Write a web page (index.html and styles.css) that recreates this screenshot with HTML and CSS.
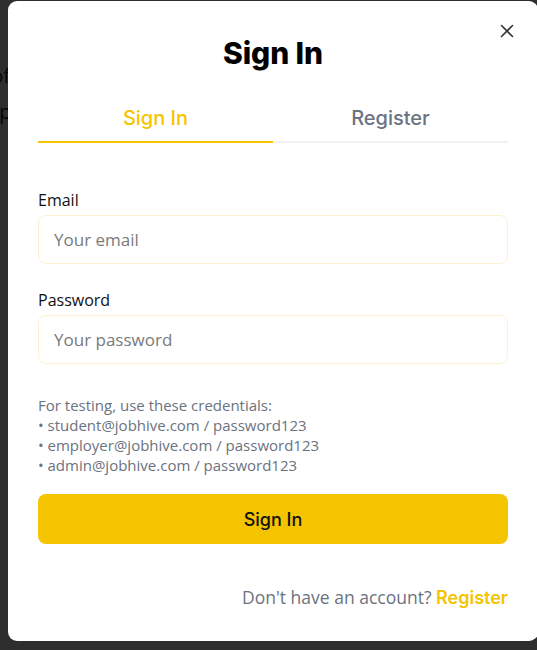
FILE: index.html
```html
<!DOCTYPE html>
<html>
<head>
<meta charset="utf-8">
<link rel="stylesheet" href="styles.css">
</head>
<body>
<div class="page">
  <p class="bg-line">Edit profile</p>
  <p class="bg-line">Quick apply</p>
</div>
<div class="backdrop"></div>
<div class="modal">
  <button class="close" aria-label="Close">
    <svg width="14" height="14" viewBox="0 0 14 14"><path d="M1.5 1.5 L12.5 12.5 M12.5 1.5 L1.5 12.5" stroke="#333" stroke-width="1.6" stroke-linecap="round" fill="none"/></svg>
  </button>
  <h1 class="title">Sign In</h1>
  <div class="tabs">
    <div class="tab active">Sign In</div>
    <div class="tab">Register</div>
  </div>
  <form class="form">
    <label class="field">
      <span class="label">Email</span>
      <input class="input" type="email" placeholder="Your email">
    </label>
    <label class="field">
      <span class="label">Password</span>
      <input class="input" type="password" placeholder="Your password">
    </label>
    <div class="hint">
      <div>For testing, use these credentials:</div>
      <div>• student@jobhive.com / password123</div>
      <div>• employer@jobhive.com / password123</div>
      <div>• admin@jobhive.com / password123</div>
    </div>
    <button type="button" class="submit">Sign In</button>
  </form>
  <div class="footer">Don't have an account? <a class="link">Register</a></div>
</div>
</body>
</html>
```
FILE: styles.css
```css
* { box-sizing: border-box; }
html, body { margin: 0; padding: 0; }
body {
  width: 537px;
  height: 650px;
  overflow: hidden;
  background: #ffffff;
  font-family: "Open Sans", "Noto Sans", sans-serif;
  position: relative;
}
.page {
  padding-top: 64px;
  margin-left: -70px;
}
.bg-line {
  margin: 0 0 12px;
  font-size: 20px;
  color: #222;
  line-height: 24px;
}
.backdrop {
  position: absolute;
  inset: 0;
  background: rgba(0, 0, 0, 0.82);
}
.modal {
  position: absolute;
  left: 8px;
  top: 1px;
  width: 530px;
  height: 640px;
  background: #fff;
  border-radius: 9px;
  padding: 34px 30px 0;
  display: flex;
  flex-direction: column;
}
.close {
  position: absolute;
  top: 23px;
  right: 24px;
  width: 14px;
  height: 14px;
  padding: 0;
  border: 0;
  background: none;
  display: flex;
}
.title {
  margin: 0;
  text-align: center;
  font-family: "Inter", sans-serif;
  font-weight: 800;
  font-size: 30px;
  line-height: 36px;
  color: #000;
  letter-spacing: -0.1px;
}
.tabs {
  display: flex;
  margin-top: 28px;
}
.tab {
  flex: 1;
  text-align: center;
  font-family: "Inter", sans-serif;
  font-weight: 500;
  font-size: 20px;
  line-height: 26px;
  padding: 6px 0 10px;
  color: #6b7280;
  border-bottom: 2px solid #f1f1f3;
}
.tab.active {
  color: #f5c400;
  border-bottom-color: #f5c400;
}
.form {
  display: flex;
  flex-direction: column;
  margin-top: 46px;
}
.field {
  display: flex;
  flex-direction: column;
  margin-bottom: 25px;
}
.label {
  font-size: 16px;
  line-height: 22px;
  color: #111;
  margin-bottom: 4px;
}
.input {
  height: 49px;
  border: 1px solid #fdf2cf;
  border-radius: 8px;
  padding: 0 15px;
  font-family: "Open Sans", sans-serif;
  font-size: 17px;
  color: #333;
  outline: none;
}
.input::placeholder { color: #7a7a7a; }
.hint {
  margin-top: 6px;
  font-size: 15px;
  line-height: 20px;
  color: #6b7280;
}
.submit {
  margin-top: 19px;
  height: 50px;
  border: 0;
  border-radius: 8px;
  background: #f5c400;
  color: #111;
  font-family: "Inter", sans-serif;
  font-weight: 500;
  font-size: 18px;
}
.footer {
  margin-top: 41px;
  text-align: right;
  font-size: 17.5px;
  line-height: 24px;
  color: #6b7280;
}
.link {
  color: #f5c400;
  font-family: "Inter", sans-serif;
  font-weight: 600;
  font-size: 18px;
}
```
